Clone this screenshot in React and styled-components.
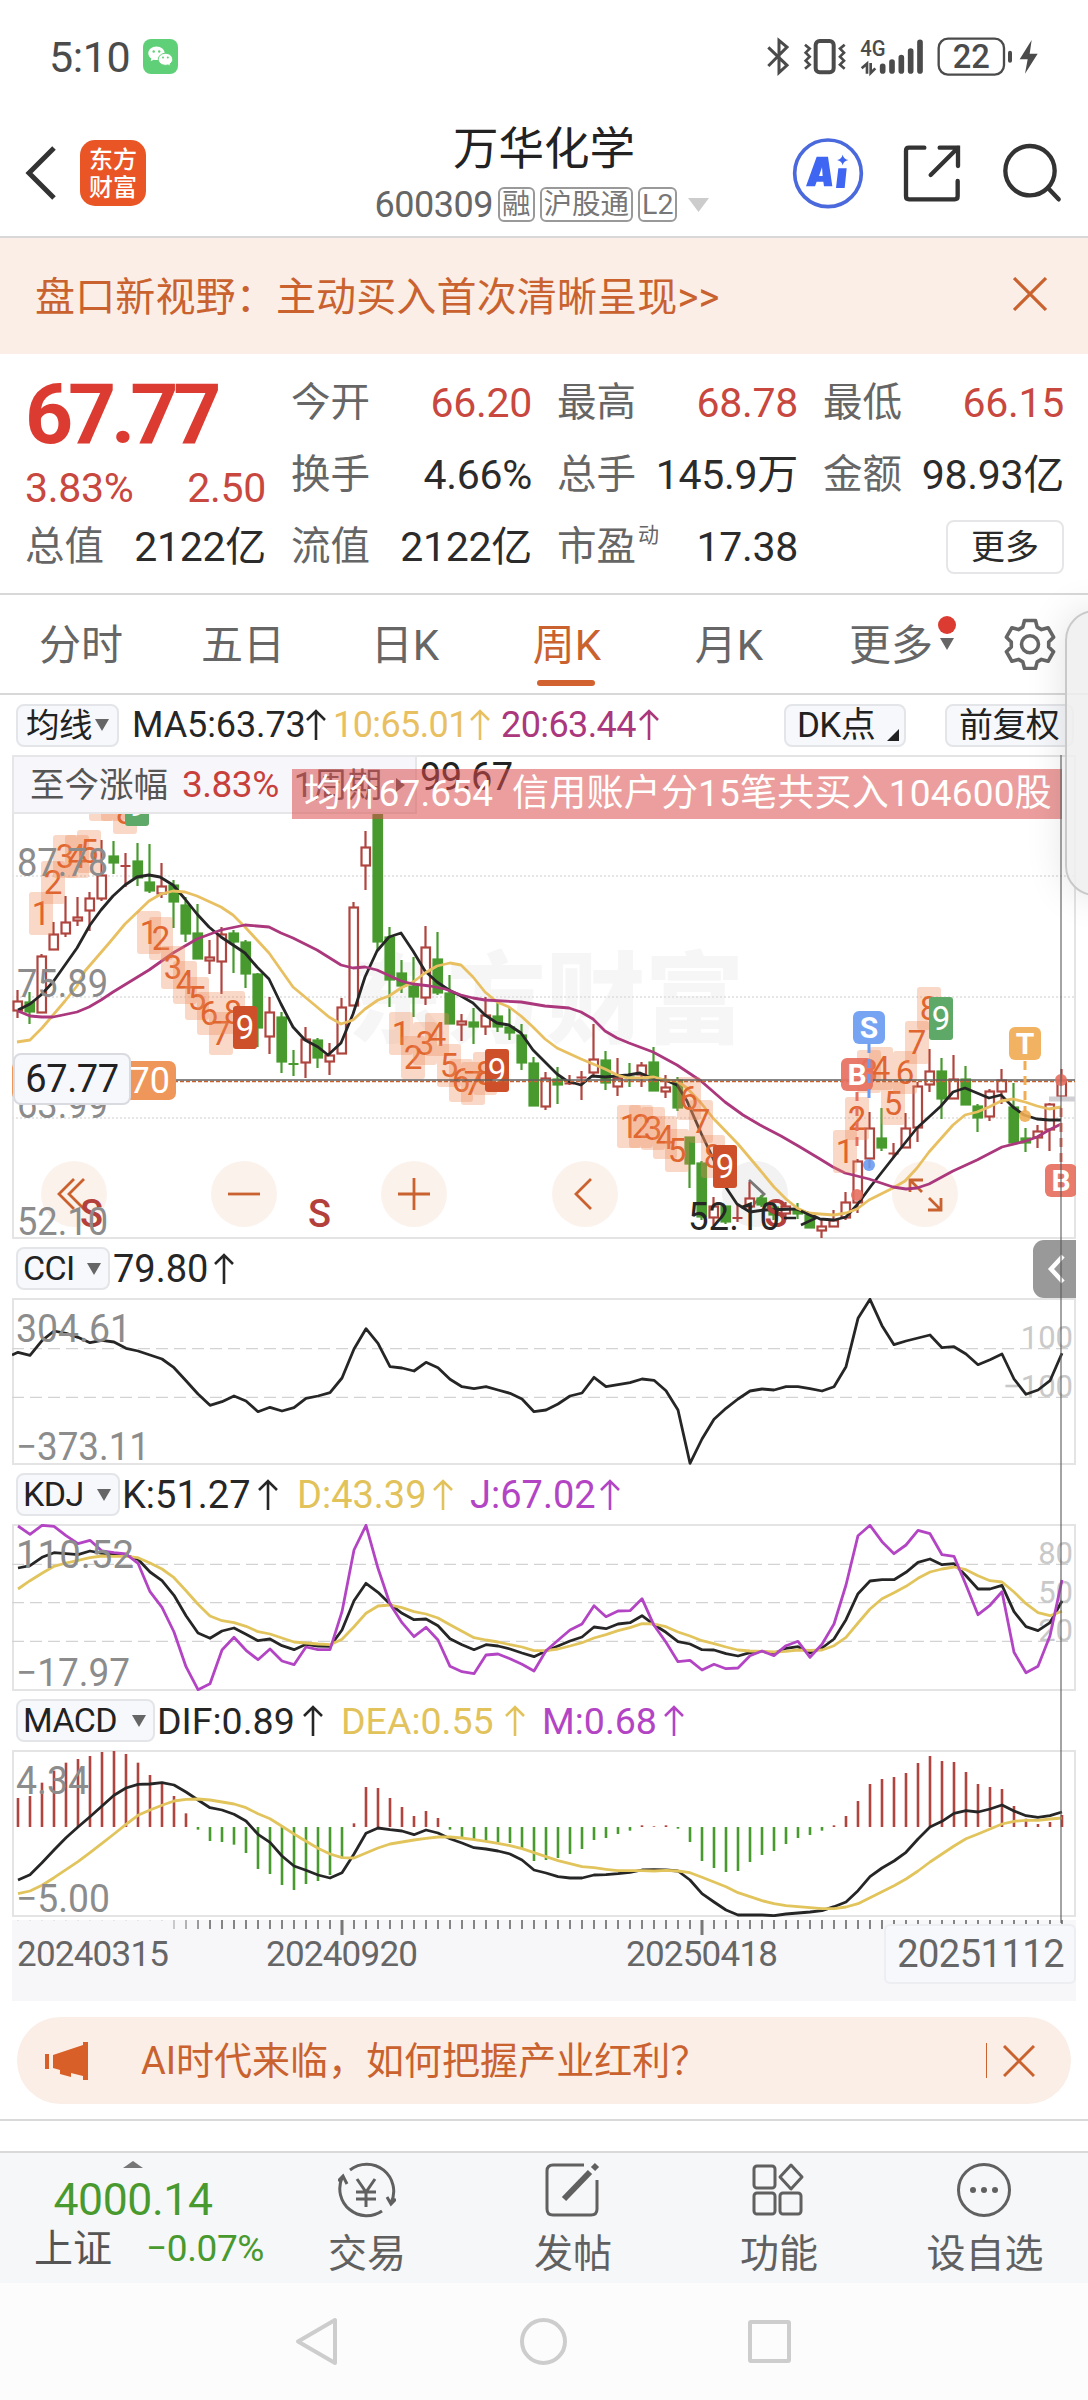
import React from 'react';
import styled, { createGlobalStyle, css } from 'styled-components';

const GlobalStyle = createGlobalStyle`
  * {
    box-sizing: border-box;
  }
  body {
    margin: 0;
    background: #fff;
    font-family: Roboto, "Noto Sans CJK SC", sans-serif;
    color: #222;
  }
  svg {
    display: block;
    flex: none;
  }
`;

const INK = '#262626';
const RED = '#b0453f';
const GREEN = '#489a2f';
const YELLOW = '#e8c062';
const PURPLE = '#ab377c';
const VIOLET = '#b345c4';
const ORANGE = '#c9622f';

/* ---------- chart data ---------- */

// [high, body top, body bottom, low, rising]
const candles = [
  [990, 1001, 1011, 1018, 1], [992, 1002, 1012, 1024, 0], [954, 956, 1013, 1013, 1],
  [922, 934, 950, 950, 1], [896, 922, 934, 937, 1], [897, 917, 921, 926, 1],
  [892, 898, 911, 931, 1], [840, 875, 899, 901, 1], [841, 856, 863, 874, 0],
  [853, 865, 867, 887, 1], [843, 861, 878, 886, 0], [844, 882, 891, 893, 0],
  [863, 886, 894, 898, 1], [880, 885, 902, 928, 0], [897, 905, 934, 942, 0],
  [904, 933, 959, 959, 0], [940, 957, 961, 974, 1], [927, 934, 962, 994, 1],
  [930, 933, 942, 973, 0], [940, 942, 974, 988, 0], [973, 974, 1028, 1047, 0],
  [997, 1012, 1037, 1054, 1], [1012, 1017, 1062, 1073, 0], [1050, 1063, 1065, 1076, 0],
  [1027, 1039, 1063, 1078, 1], [1038, 1040, 1058, 1068, 0], [1043, 1055, 1062, 1075, 1],
  [998, 1007, 1054, 1054, 1], [902, 907, 1006, 1006, 1], [831, 847, 866, 890, 1],
  [780, 790, 942, 950, 0], [927, 937, 980, 1007, 0], [960, 973, 986, 993, 0],
  [957, 986, 997, 1017, 0], [926, 947, 998, 1005, 1], [932, 959, 993, 995, 0],
  [975, 993, 1024, 1024, 0], [1014, 1021, 1025, 1041, 1], [1008, 1022, 1027, 1044, 0],
  [997, 1015, 1027, 1035, 1], [1002, 1016, 1027, 1032, 0], [1008, 1027, 1033, 1040, 0],
  [1024, 1035, 1063, 1070, 0], [1057, 1063, 1106, 1106, 0], [1072, 1078, 1107, 1110, 1],
  [1067, 1079, 1085, 1104, 0], [1075, 1082, 1085, 1085, 1], [1071, 1076, 1079, 1100, 1],
  [1024, 1059, 1073, 1075, 1], [1051, 1060, 1083, 1090, 0], [1058, 1078, 1087, 1096, 1],
  [1063, 1077, 1078, 1087, 0], [1062, 1065, 1075, 1087, 1], [1047, 1062, 1091, 1091, 0],
  [1075, 1087, 1092, 1098, 1], [1077, 1080, 1108, 1111, 0], [1137, 1137, 1164, 1188, 0],
  [1161, 1163, 1217, 1220, 0], [1197, 1206, 1218, 1225, 1], [1206, 1206, 1222, 1224, 0],
  [1205, 1217, 1219, 1222, 1], [1182, 1198, 1207, 1212, 1], [1195, 1198, 1205, 1207, 0],
  [1203, 1207, 1215, 1220, 0], [1202, 1206, 1214, 1220, 1], [1203, 1210, 1214, 1219, 0],
  [1215, 1215, 1228, 1228, 0], [1220, 1226, 1231, 1238, 1], [1210, 1220, 1227, 1227, 1],
  [1192, 1202, 1218, 1220, 1], [1159, 1161, 1203, 1213, 1], [1112, 1128, 1159, 1168, 1],
  [1108, 1138, 1148, 1151, 0], [1143, 1152, 1155, 1158, 1], [1113, 1128, 1148, 1148, 1],
  [1082, 1086, 1128, 1142, 1], [1049, 1071, 1085, 1092, 1], [1058, 1071, 1099, 1119, 0],
  [1055, 1079, 1099, 1099, 1], [1066, 1079, 1105, 1105, 0], [1104, 1106, 1118, 1132, 0],
  [1089, 1091, 1117, 1121, 1], [1069, 1080, 1092, 1104, 1], [1083, 1107, 1143, 1143, 0],
  [1128, 1138, 1143, 1152, 0], [1125, 1131, 1138, 1148, 1], [1103, 1104, 1130, 1151, 1],
  [1069, 1080, 1097, 1097, 1],
];

const ma5 =
  '18,1010 30,1004 41,995 53,982 77,948 90,925 101,910 113,896 125,885 137,877 149,875 160,877 173,885 185,899 197,914 209,927 221,937 245,953 257,967 269,979 281,1004 293,1027 305,1040 318,1047 328,1055 341,1043 353,1014 365,977 377,951 389,937 401,933 413,951 425,971 437,982 449,990 461,996 473,1003 485,1015 497,1023 509,1025 521,1033 533,1050 557,1074 567,1081 581,1085 592,1076 605,1077 628,1075 640,1073 654,1079 665,1080 677,1085 687,1101 701,1133 712,1156 725,1186 737,1204 750,1212 764,1210 796,1209 808,1213 820,1219 834,1220 846,1217 857,1205 871,1186 893,1158 917,1128 941,1106 953,1092 965,1088 989,1098 1001,1095 1013,1107 1024,1115 1037,1119 1049,1120 1061,1120';
const ma10 =
  '17,1042 30,1040 42,1028 65,1001 77,986 85,971 110,942 125,924 149,901 161,894 173,891 185,892 197,896 221,907 233,915 245,927 257,940 269,953 293,987 317,1007 329,1017 341,1024 353,1020 365,1009 378,1000 389,996 401,988 413,982 425,973 437,966 450,963 461,965 473,977 485,992 497,1002 509,1007 521,1016 533,1027 545,1039 557,1048 581,1059 605,1069 617,1075 628,1078 640,1078 654,1077 665,1080 677,1081 687,1088 701,1103 713,1118 738,1144 760,1170 774,1187 786,1199 797,1208 808,1213 820,1214 834,1215 846,1213 857,1209 869,1200 881,1194 893,1188 905,1181 917,1168 929,1152 953,1125 965,1115 977,1112 989,1107 1001,1101 1013,1099 1025,1102 1037,1106 1049,1109 1061,1107';
const ma20 =
  '18,1011 30,1016 42,1017 53,1017 77,1012 89,1007 101,1000 113,992 149,970 173,953 197,939 221,930 245,925 269,927 281,933 293,938 317,950 341,965 353,968 365,967 377,970 401,981 413,984 430,986 445,989 461,995 473,998 485,1000 521,1002 545,1006 569,1008 581,1012 593,1019 605,1031 617,1038 629,1043 653,1052 677,1065 701,1081 725,1102 743,1115 760,1125 781,1136 800,1147 820,1159 833,1167 845,1173 869,1179 893,1187 906,1189 917,1188 929,1184 953,1171 977,1160 1002,1147 1026,1141 1037,1137 1049,1130 1061,1124';

// nine-turn counters: first box x, box tops, colour of the closing 9
const turns = [
  { x: 29, tops: [892, 861, 835, 835, 830, 778, 778, 791, 783], last: '#5fa968' },
  { x: 137, tops: [911, 917, 946, 961, 977, 992, 1012, 991, 1006], last: '#cd502a' },
  { x: 389, tops: [1012, 1036, 1022, 1013, 1044, 1059, 1062, 1052, 1049], last: '#cd502a' },
  { x: 617, tops: [1105, 1105, 1107, 1116, 1129, 1077, 1100, 1135, 1145], last: '#cd502a' },
  { x: 833, tops: [1130, 1097, 1050, 1047, 1082, 1051, 1021, 987, 997], last: '#5fa968' },
];

// indicator series, three units per pixel, measured from the panel's own origin
const cci = [
  367, 376, 332, 303, 310, 322, 338, 331, 336, 355, 363, 375, 387, 413, 452, 492, 526, 515, 498, 513, 545, 532,
  543, 533, 505, 498, 488, 444, 357, 296, 340, 410, 414, 423, 397, 413, 448, 470, 476, 470, 480, 490, 507, 545,
  540, 522, 498, 489, 442, 470, 464, 458, 447, 451, 482, 540, 700, 627, 568, 535, 507, 483, 477, 480, 470, 470,
  476, 483, 470, 410, 265, 208, 287, 344, 333, 324, 315, 353, 350, 372, 404, 389, 372, 447, 493, 480, 452, 370,
];
const kdjK = [
  1014, 1007, 982, 968, 971, 974, 963, 970, 973, 976, 988, 1026, 1052, 1096, 1157, 1209, 1225, 1203, 1194, 1213,
  1232, 1227, 1247, 1259, 1243, 1248, 1249, 1200, 1112, 1060, 1087, 1122, 1150, 1169, 1167, 1187, 1226, 1244,
  1259, 1244, 1248, 1257, 1269, 1280, 1263, 1248, 1233, 1221, 1191, 1196, 1182, 1178, 1157, 1184, 1207, 1235,
  1242, 1259, 1260, 1271, 1278, 1268, 1264, 1270, 1255, 1250, 1269, 1254, 1227, 1169, 1091, 1053, 1049, 1049,
  1027, 997, 987, 1004, 1001, 1037, 1077, 1077, 1066, 1145, 1190, 1202, 1178, 1113,
];
const kdjD = [
  1077, 1052, 1030, 1009, 999, 991, 983, 978, 979, 979, 983, 999, 1017, 1043, 1082, 1123, 1158, 1172, 1178, 1189,
  1205, 1212, 1224, 1236, 1239, 1242, 1244, 1228, 1190, 1150, 1128, 1125, 1133, 1145, 1152, 1164, 1184, 1204,
  1223, 1230, 1236, 1244, 1251, 1262, 1262, 1257, 1248, 1238, 1224, 1214, 1202, 1193, 1181, 1182, 1190, 1206,
  1218, 1232, 1241, 1251, 1260, 1263, 1264, 1266, 1264, 1260, 1261, 1260, 1247, 1222, 1179, 1137, 1106, 1088,
  1069, 1045, 1026, 1017, 1011, 1019, 1037, 1052, 1056, 1086, 1121, 1148, 1157, 1144,
];
const kdjJ = [
  888, 913, 886, 889, 917, 941, 931, 963, 968, 972, 1000, 1085, 1132, 1206, 1310, 1379, 1361, 1260, 1222, 1261,
  1289, 1257, 1293, 1304, 1251, 1259, 1259, 1145, 960, 886, 1015, 1122, 1178, 1220, 1192, 1230, 1309, 1325, 1331,
  1275, 1272, 1286, 1303, 1323, 1262, 1231, 1200, 1182, 1127, 1160, 1143, 1142, 1106, 1186, 1237, 1295, 1291,
  1320, 1303, 1316, 1314, 1277, 1263, 1277, 1247, 1234, 1282, 1243, 1182, 1065, 917, 886, 935, 971, 945, 901,
  911, 974, 979, 1065, 1154, 1126, 1085, 1267, 1328, 1309, 1217, 1050,
];
const macdBars = [
  294, 288, 248, 212, 188, 177, 168, 156, 153, 162, 188, 225, 250, 288, 340, 389, 423, 426, 434, 459, 507, 522,
  555, 570, 552, 543, 525, 472, 370, 261, 264, 294, 321, 348, 333, 354, 389, 411, 420, 423, 427, 429, 447, 483,
  480, 474, 462, 447, 420, 414, 402, 392, 376, 379, 376, 386, 426, 483, 504, 516, 513, 486, 465, 453, 432, 414,
  405, 392, 376, 348, 303, 252, 237, 231, 219, 189, 168, 183, 186, 216, 252, 261, 267, 318, 356, 372, 366, 345,
];
const dif = [
  540, 524, 488, 450, 413, 381, 350, 318, 286, 264, 253, 252, 248, 255, 276, 300, 323, 330, 343, 363, 403, 427,
  468, 498, 511, 525, 534, 518, 462, 400, 384, 389, 393, 404, 390, 399, 416, 429, 443, 447, 453, 462, 480, 510,
  519, 530, 534, 534, 525, 524, 521, 517, 510, 509, 510, 513, 540, 581, 606, 630, 645, 645, 645, 647, 642, 639,
  636, 632, 620, 606, 572, 530, 504, 483, 457, 417, 381, 364, 340, 332, 336, 327, 315, 333, 347, 352, 347, 336,
];
const dea = [
  581, 573, 556, 533, 509, 485, 458, 430, 402, 373, 346, 330, 316, 303, 298, 297, 300, 306, 312, 323, 341, 356,
  379, 402, 424, 445, 462, 473, 474, 459, 444, 432, 426, 420, 415, 411, 411, 414, 419, 424, 430, 437, 446, 458,
  470, 482, 491, 500, 503, 508, 512, 512, 512, 513, 511, 513, 518, 532, 546, 560, 578, 590, 602, 611, 617, 620,
  623, 626, 626, 621, 611, 593, 575, 557, 537, 513, 486, 462, 438, 416, 402, 387, 372, 364, 361, 361, 357, 354,
];

const toPoints = (values, origin) =>
  values.map((v, i) => `${6 + 12 * i},${((v - origin) / 3).toFixed(1)}`).join(' ');

/* ---------- page shell ---------- */

const Page = styled.div`
  position: relative;
  width: 1088px;
  height: 2400px;
  overflow: hidden;
  display: flex;
  flex-direction: column;
  background: #fff;
`;

const StatusBar = styled.div`
  height: 115px;
  padding: 0 48px 2px 49px;
  display: flex;
  align-items: center;
  justify-content: space-between;
  color: #4b4b4b;
`;

const Clock = styled.div`
  display: flex;
  align-items: center;
  gap: 13px;
  font-size: 43px;
  letter-spacing: -0.4px;
  line-height: 50px;
`;

const Header = styled.header`
  height: 123px;
  border-bottom: 2px solid #d8d8d8;
  display: grid;
  grid-template-columns: 362px 1fr 362px;
  align-items: center;
`;

const HeaderLeft = styled.div`
  display: flex;
  align-items: center;
  gap: 23px;
  padding: 0 0 5px 25px;
`;

const Logo = styled.div`
  width: 66px;
  height: 66px;
  border-radius: 15px;
  background: #ea5526;
  color: #fff;
  font-family: "Noto Sans CJK SC", sans-serif;
  font-weight: 500;
  font-size: 24px;
  line-height: 28px;
  text-align: center;
  padding-top: 4px;
`;

const HeaderRight = styled.div`
  display: flex;
  align-items: center;
  justify-content: flex-end;
  padding: 0 26px 5px 0;
`;

const TitleBlock = styled.div`
  display: flex;
  flex-direction: column;
  align-items: center;
  padding-bottom: 7px;
`;

const Title = styled.h1`
  margin: 0 0 5px;
  font-size: 45.5px;
  font-weight: 400;
  line-height: 60px;
  color: #222;
`;

const SubTitle = styled.div`
  display: flex;
  align-items: center;
  height: 40px;
  font-size: 36px;
  letter-spacing: -0.5px;
  color: #666;
  gap: 5px;
  padding-right: 3px;
`;

const Tag = styled.span`
  height: 35px;
  padding: 0 2px;
  border: 2px solid #999;
  border-radius: 6px;
  font-size: 28.5px;
  letter-spacing: 0;
  line-height: 31px;
  color: #777;
`;

const Notice = styled.div`
  height: 116px;
  background: #fbeee6;
  color: ${ORANGE};
  display: flex;
  align-items: center;
  justify-content: space-between;
  padding: 0 41px 4px 35px;
  font-size: 40px;
  letter-spacing: 0.15px;
`;

/* ---------- quote panel ---------- */

const QuotePanel = styled.section`
  height: 241px;
  padding: 13px 24px 0 25px;
  border-bottom: 2px solid #d8d8d8;
  display: grid;
  grid-template-columns: repeat(4, 241px);
  grid-template-rows: repeat(3, 72px);
  column-gap: 25px;
`;

const PriceCell = styled.div`
  grid-row: span 2;
`;

const Price = styled.div`
  font-size: 84px;
  font-weight: 700;
  line-height: 96px;
  letter-spacing: -5.2px;
  color: #dc3b31;
`;

const QuoteCell = styled.div`
  display: flex;
  align-items: center;
  justify-content: space-between;
  font-size: 41px;
  line-height: 50px;
  letter-spacing: -0.3px;
  color: ${p => (p.$up ? '#c8473e' : '#2b2b2b')};
  ${p =>
    p.$end &&
    css`
      justify-content: flex-end;
    `}
  ${p =>
    p.$short &&
    css`
      height: 50px;
    `}
`;

const QuoteLabel = styled.span`
  display: flex;
  font-size: 39.5px;
  color: #666;
  letter-spacing: 0;
`;

const Sup = styled.sup`
  font-size: 21px;
  line-height: 21px;
  margin: 3px 0 0 2px;
`;

const MoreButton = styled.button`
  width: 118px;
  height: 54px;
  padding: 0;
  border: 2px solid #e6e6e8;
  border-radius: 8px;
  background: #fff;
  font: 34px/46px Roboto, "Noto Sans CJK SC", sans-serif;
  color: #2b2b2b;
`;

/* ---------- period tabs ---------- */

const Tabs = styled.nav`
  height: 100px;
  border-bottom: 2px solid #d8d8d8;
  display: flex;
`;

const Tab = styled.div`
  position: relative;
  width: 162px;
  padding-top: 3px;
  text-align: center;
  font-size: 42px;
  line-height: 95px;
  color: ${p => (p.$active ? ORANGE : '#666')};
  ${p =>
    p.$active &&
    css`
      &::after {
        content: '';
        position: absolute;
        left: 51px;
        bottom: 7px;
        width: 58px;
        height: 6px;
        border-radius: 3px;
        background: #d2622f;
      }
    `}
`;

const RedDot = styled.i`
  position: absolute;
  top: 21px;
  right: 16px;
  width: 18px;
  height: 18px;
  border-radius: 50%;
  background: #dc3b31;
`;

const TabCaret = styled.i`
  position: absolute;
  top: 43px;
  right: 18px;
  border: 7px solid transparent;
  border-top: 12px solid #666;
  border-bottom: 0;
`;

const GearCell = styled.div`
  flex: 1;
  display: flex;
  align-items: center;
  padding-left: 32px;
`;

/* ---------- chart block ---------- */

const Charts = styled.section`
  position: relative;
  padding: 0 12px;
  height: 1305px;
`;

const Crosshair = styled.div`
  position: absolute;
  left: 1060px;
  top: 60px;
  width: 2px;
  height: 1168px;
  background: rgba(90, 90, 90, 0.55);
`;

const IndicatorRow = styled.div`
  display: flex;
  align-items: center;
  height: ${p => p.$h || 60}px;
  padding: 0 2px 0 4px;
`;

const Picker = styled.div`
  position: relative;
  width: ${p => p.$w}px;
  height: 43px;
  border: 2px solid #e3e5e9;
  border-radius: 8px;
  background: #f7f8fb;
  display: flex;
  align-items: center;
  justify-content: space-between;
  padding: 0 ${p => p.$pad || 7}px 0 ${p => p.$pad || 5}px;
  font-size: ${p => p.$size || 34}px;
  line-height: 39px;
  letter-spacing: -0.6px;
`;

const Caret = styled.i`
  border: 7px solid transparent;
  border-top: 12px solid #666;
  border-bottom: 0;
`;

const CornerCaret = styled.i`
  position: absolute;
  right: 5px;
  bottom: 4px;
  border-left: 12px solid transparent;
  border-bottom: 12px solid #222;
`;

const Reading = styled.div`
  display: flex;
  align-items: center;
  justify-content: space-between;
  width: ${p => p.$w}px;
  margin-left: ${p => p.$ml}px;
  font-size: ${p => p.$size || 38}px;
  line-height: 44px;
  letter-spacing: ${p => p.$ls || 0}px;
  white-space: nowrap;
  color: ${p => p.$color || INK};
`;

const Spacer = styled.div`
  flex: 1;
  max-width: ${p => (p.$max ? `${p.$max}px` : 'none')};
`;

const Plot = styled.div`
  position: relative;
  height: ${p => p.$h}px;
`;

const ChartLayer = styled.div`
  position: relative;
`;

const SinceStrip = styled.div`
  position: absolute;
  left: 0;
  top: 0;
  width: 405px;
  height: 59px;
  border: 2px solid #e6e6e8;
  background: #f7f7fb;
  display: flex;
  align-items: center;
  padding-left: 16px;
  font-size: 34.5px;
  line-height: 50px;
  white-space: nowrap;
  color: #555;
`;

const SinceValue = styled.span`
  margin: 0 15px 0 14px;
  font-size: 37px;
  letter-spacing: -0.5px;
  color: #c8403c;
`;

const SinceMark = styled.i`
  margin-left: 14px;
  border: 7px solid transparent;
  border-left: 9px solid #555;
  border-right: 0;
`;

const DealBand = styled.div`
  position: absolute;
  left: 280px;
  top: 14px;
  width: 770px;
  height: 50px;
  padding-left: 12px;
  background: rgba(219, 78, 76, 0.55);
  font-size: 37px;
  line-height: 49px;
  letter-spacing: 0.2px;
  white-space: pre;
  color: #fff;
`;

const HighMark = styled.div`
  position: absolute;
  left: 408px;
  top: 0;
  font-size: 38px;
  line-height: 44px;
  letter-spacing: -0.6px;
`;

const PriceTag = styled.div`
  position: absolute;
  left: 1px;
  top: 298px;
  width: 118px;
  height: 52px;
  border: 2px solid #d9dbe0;
  border-radius: 8px;
  background: #f7f8fb;
  font-size: 38px;
  line-height: 48px;
  letter-spacing: -0.4px;
  text-align: center;
`;

const CostTag = styled.div`
  position: absolute;
  left: 0;
  top: 306px;
  width: 164px;
  height: 39px;
  border-radius: 7px;
  background: #ef965b;
  color: #fff;
  font-size: 36px;
  line-height: 40px;
  text-align: right;
  padding-right: 6px;
`;

const RoundButton = styled.div`
  position: absolute;
  left: ${p => p.$x - 33}px;
  top: 406px;
  width: 66px;
  height: 66px;
  border-radius: 50%;
  background: ${p => (p.$muted ? '#f2f2f2' : '#fbf2ec')};
  color: ${p => (p.$muted ? '#777' : ORANGE)};
`;

const DrawerTab = styled.div`
  position: absolute;
  right: 12px;
  top: 545px;
  width: 43px;
  height: 58px;
  border-radius: 11px 0 0 11px;
  background: #999;
  display: flex;
  align-items: center;
  padding-left: 14px;
`;

const Axis = styled.div`
  height: 81px;
  margin-top: 3px;
  position: relative;
  background: #f7f7fa;
`;

const CurrentDate = styled.div`
  position: absolute;
  right: 0;
  top: 4px;
  width: 192px;
  height: 60px;
  border: 2px solid #edeef1;
  border-radius: 6px;
  background: #f7f8fb;
  font-size: 38px;
  line-height: 56px;
  text-align: right;
  padding-right: 10px;
  letter-spacing: -0.5px;
  color: #666;
`;

/* ---------- bottom ---------- */

const Promo = styled.div`
  height: 87px;
  margin: 17px 17px 15px 17px;
  border-radius: 44px;
  background: #fbeee6;
  color: ${ORANGE};
  display: flex;
  align-items: center;
  font-size: 38px;
  padding: 0 36px 0 28px;
`;

const PromoText = styled.span`
  flex: 1;
  margin-left: 52px;
  padding-bottom: 6px;
`;

const PromoDivider = styled.i`
  width: 1px;
  height: 35px;
  margin-right: 16px;
  background: ${ORANGE};
`;

const Divider = styled.div`
  height: 34px;
  border-top: 2px solid #d9d9d9;
  border-bottom: 2px solid #d9d9d9;
`;

const BottomBar = styled.footer`
  height: 130px;
  background: #f6f7f9;
  display: flex;
`;

const IndexBox = styled.div`
  width: 264px;
  display: flex;
  flex-direction: column;
  align-items: center;
  padding: 8px 0 0 2px;
`;

const UpCaret = styled.i`
  border: 10px solid transparent;
  border-bottom: 7px solid #777;
  border-top: 0;
`;

const IndexValue = styled.div`
  margin-top: 7px;
  font-size: 44.5px;
  line-height: 50px;
  letter-spacing: -0.4px;
  color: ${GREEN};
`;

const IndexRow = styled.div`
  width: 230px;
  margin-left: 32px;
  display: flex;
  align-items: center;
  justify-content: space-between;
  font-size: 39px;
  line-height: 20px;
  margin-top: 14px;
  color: #555;
`;

const IndexChange = styled.span`
  font-size: 37px;
  letter-spacing: -0.4px;
  color: ${GREEN};
`;

const Action = styled.div`
  width: 206px;
  display: flex;
  flex-direction: column;
  align-items: center;
  padding-top: 9px;
  font-size: 39px;
  line-height: 72px;
  color: #606060;
`;

const SystemNav = styled.div`
  flex: 1;
  background: #fcfcfc;
  display: flex;
  justify-content: center;
  padding-top: 32px;
`;

const EdgePanel = styled.div`
  position: absolute;
  left: 1065px;
  top: 610px;
  width: 60px;
  height: 286px;
  border: 2px solid #c9c9c9;
  border-radius: 44px;
  background: rgba(238, 238, 238, 0.85);
  box-shadow: 0 0 40px rgba(0, 0, 0, 0.12);
`;

/* ---------- small drawings ---------- */

const UpArrow = () => (
  <svg width="20" height="32" viewBox="0 0 20 32" fill="none" stroke="currentColor" strokeWidth="2.600">
    <path d="M10 31V2M1 11l9-9 9 9" />
  </svg>
);

const Cross = ({ size }) => (
  <svg width={size} height={size} viewBox="0 0 32 32" fill="none" stroke={ORANGE} strokeWidth="3">
    <path d="M1 1l30 30M31 1L1 31" />
  </svg>
);

const WeChat = () => (
  <svg width="35" height="35" viewBox="0 0 35 35">
    <rect width="35" height="35" rx="8" fill="#5fd077" />
    <path d="M13.5 7.5c-4.600 0-8.200 3-8.200 6.800 0 2.200 1.200 4 3 5.300l-.6 2.600 2.900-1.500c1 .3 1.900.4 2.900.4 4.600 0 8.200-3 8.200-6.800s-3.600-6.800-8.200-6.800z" fill="#fff" />
    <path d="M22.500 14.300c-4 0-7.200 2.700-7.200 6s3.200 6 7.200 6c.9 0 1.700-.1 2.500-.4l2.500 1.300-.5-2.200c1.700-1.100 2.700-2.800 2.700-4.700 0-3.300-3.200-6-7.200-6z" fill="#fff" stroke="#5fd077" />
    <g fill="#5fd077">
      <circle cx="10.700" cy="12.500" r="1.200" />
      <circle cx="16.200" cy="12.500" r="1.200" />
      <circle cx="20" cy="18.500" r="1" />
      <circle cx="24.800" cy="18.500" r="1" />
    </g>
  </svg>
);

const StatusIcons = () => (
  <svg width="273" height="40" viewBox="80 49 819 120" fill="none" stroke="#4b4b4b">
    <path d="M84 80l56 54-24 22V59l24 20-56 57" strokeWidth="9" />
    <rect x="226" y="61" width="54" height="94" rx="12" strokeWidth="12" />
    <path d="M194 72l14 12-12 12 12 12-12 12 12 12-14 12M313 72l-14 12 12 12-12 12 12 12-12 12 14 12" strokeWidth="8" />
    <g strokeWidth="17" strokeLinecap="round">
      <path d="M427 137v14M455 124v27M483 111v40M511 91v60M539 65v86" />
    </g>
    <path d="M380 159v-30l-16 14M391 127v30l14-14" strokeWidth="8" />
    <rect x="595" y="54" width="196" height="108" rx="28" strokeWidth="7" />
    <path d="M809 96v24" strokeWidth="12" strokeLinecap="round" />
    <path d="M874 58l-36 58h24l-8 43 38-60h-24z" fill="#4b4b4b" stroke="none" />
    <text x="398" y="107" fontSize="66" fontWeight="500" textAnchor="middle" textLength="76" lengthAdjust="spacingAndGlyphs" fill="#4b4b4b" stroke="none">4G</text>
    <text x="693" y="143" fontSize="98" fontWeight="500" textAnchor="middle" fill="#4b4b4b" stroke="none">22</text>
  </svg>
);

const BackIcon = () => (
  <svg width="32" height="54" viewBox="0 0 32 54" fill="none" stroke="#333" strokeWidth="5">
    <path d="M29 2L4 27l25 25" />
  </svg>
);

const HeaderIcons = () => (
  <svg width="270" height="72" viewBox="152 348 810 216" fill="none" stroke="#333" strokeWidth="13" strokeLinecap="round">
    <circle cx="260" cy="457" r="100" stroke="#4a69dd" strokeWidth="11" />
    <path d="M194 496l32-89h34l13 89h-25l-2-14h-20l-5 14zM233 465h11l-2-26z" fill="#3f66f2" fillRule="evenodd" stroke="none" />
    <path d="M291 442h25l-6 59h-26zM304 401q3 13 17 16-14 3-17 16-3-13-17-16 14-3 17-16z" fill="#3f66f2" stroke="none" />
    <path d="M549 380h-46q-9 0-9 9v137q0 9 9 9h137q9 0 9-9v-46M595 380h55v55M650 380l-82 82" />
    <circle cx="866" cy="449" r="74" />
    <path d="M920 501l32 34" />
  </svg>
);

const GearIcon = () => (
  <svg width="52" height="52" viewBox="0 0 52 52" fill="none" stroke="#666" strokeWidth="3.600" strokeLinejoin="round">
    <path d="M20.500 2.500h11l1.700 6.600 4.300 2.500 6.600-1.900 5.500 9.500-4.900 4.800v5l4.900 4.700-5.500 9.600-6.600-1.900-4.300 2.500-1.700 6.600h-11l-1.700-6.600-4.300-2.500-6.600 1.900-5.500-9.600 4.900-4.700v-5l-4.900-4.800 5.500-9.500 6.600 1.900 4.300-2.500z" />
    <circle cx="26" cy="26.300" r="8.500" />
  </svg>
);

const Megaphone = () => (
  <svg width="44" height="38" viewBox="0 0 44 38" fill="#d95f28">
    <path d="M0 12h4v15H0zM8 13L38 3V0h5v38h-5v-4l-12-3v4l-11-3v-4l-7-2z" />
  </svg>
);

const buttonIcons = [
  { x: 62, d: 'M33 18L18 33l15 15M43 18L28 33l15 15' },
  { x: 232, d: 'M17 33h32' },
  { x: 402, d: 'M17 33h32M33 17v32' },
  { x: 573, d: 'M39 18L24 33l15 15' },
  { x: 743, d: 'M27 19l15 14-15 15', muted: true },
  { x: 913, d: 'M18 31V19h13M18 19l12 12M49 37v12H36M49 49L37 37' },
];

/* ---------- charts ---------- */

const AxisLabel = ({ x = 17, y, w, children }) => (
  <text x={x} y={y} fontSize="38.500" fill="#8c8c8c" textLength={w} lengthAdjust="spacingAndGlyphs">
    {children}
  </text>
);

const Candle = ({ index, data }) => {
  const [high, top, bottom, low, rising] = data;
  const x = 17.500 + 12 * index;
  const color = rising ? RED : GREEN;
  return (
    <g stroke={color} strokeWidth="2.200">
      <path d={`M${x} ${high}V${top}M${x} ${bottom}V${low}`} />
      {bottom - top < 4 ? (
        <path d={`M${x - 5} ${(top + bottom) / 2}h10M${x} ${top}V${bottom}`} />
      ) : (
        <rect x={x - 4} y={top + 0.500} width="8.500" height={bottom - top - 1} fill={rising ? '#fff' : color} />
      )}
    </g>
  );
};

const TurnMarks = ({ x, tops, last }) =>
  tops.map((top, i) => (
    <g key={i}>
      <rect x={x + 12 * i} y={top} width="24" height="43" rx="3" fill={i === 8 ? last : 'rgba(236, 140, 92, 0.34)'} />
      <text x={x + 12 * i + 12} y={top + 33} fontSize="33" textAnchor="middle" fill={i === 8 ? '#fff' : '#e0652f'}>
        {i + 1}
      </text>
    </g>
  ));

const TradeBadge = ({ x, y, color, letter, line, dot }) => (
  <g>
    <path d={`M${x} ${line[0]}V${line[1]}`} stroke={color} strokeWidth="3" strokeDasharray="9 6" />
    <circle cx={x} cy={dot} r="6" fill={color} fillOpacity="0.9" />
    <rect x={x - 16} y={y} width="32" height="33" rx="6" fill={color} fillOpacity="0.92" />
    <text x={x} y={y + 27} fontSize="30" fontWeight="700" textAnchor="middle" fill="#fff">
      {letter}
    </text>
  </g>
);

const Watermark = () => (
  <svg width="1064" height="484" viewBox="12 755 1064 484">
    <text x="348" y="1035" fontSize="99" fontWeight="900" fill="#f6f6f6">东方财富</text>
  </svg>
);

const PriceChart = () => (
  <svg width="1064" height="484" viewBox="12 755 1064 484" fill="none">
    <rect x="13" y="756" width="1062" height="482" stroke="#e4e4e4" strokeWidth="2" />
    <path d="M12 876H1075M12 997H1075M12 1118H1075" stroke="#dedede" strokeWidth="1.500" strokeDasharray="2 2" />
    {candles.map((c, i) => (
      <Candle key={i} index={i} data={c} />
    ))}
    <g strokeWidth="2.800" strokeLinejoin="round">
      <polyline points={ma5} stroke={INK} />
      <polyline points={ma10} stroke={YELLOW} />
      <polyline points={ma20} stroke={PURPLE} />
    </g>
    {turns.map(t => (
      <TurnMarks key={t.x} {...t} />
    ))}
    <path d="M12 1081.500H1075" stroke="#c9622f" strokeWidth="1.500" strokeDasharray="4 2" />
    <path d="M12 1080H1075" stroke="#5f5f5f" strokeWidth="1.300" />
    <path d="M1049 1099H1075" stroke="#cfcfd4" strokeWidth="5" />
    <TradeBadge x={857} y={1058} color="#e6705f" letter="B" line={[1092, 1147]} dot={1195} />
    <TradeBadge x={869} y={1011} color="#6a9cf2" letter="S" line={[1044, 1099]} dot={1165} />
    <TradeBadge x={1025} y={1027} color="#f0ad55" letter="T" line={[1061, 1112]} dot={1116} />
    <TradeBadge x={1061} y={1164} color="#e6705f" letter="B" line={[1108, 1163]} dot={1080} />
    <AxisLabel y={876} w={91}>87.78</AxisLabel>
    <AxisLabel y={997} w={91}>75.89</AxisLabel>
    <AxisLabel y={1118} w={91}>63.99</AxisLabel>
    <g fontSize="38" fontWeight="500" fill="#b3403b" textAnchor="middle">
      <text x="91.500" y="1227">S</text>
      <text x="319.500" y="1227">S</text>
      <text x="776" y="1227">S</text>
    </g>
    <AxisLabel y={1235} w={91}>52.10</AxisLabel>
    <text x="688" y="1230" fontSize="38" fill={INK} textLength="92" lengthAdjust="spacingAndGlyphs">52.10</text>
    <path d="M784 1218h12M801 1211l15 7-15 7" stroke={INK} strokeWidth="2.600" />
  </svg>
);

const IndicatorPlot = ({ origin, grid, children }) => (
  <svg width="1064" height="167" viewBox="0 -1 1064 167" fill="none">
    <rect x="1" y="0" width="1062" height="165" stroke="#e4e4e4" strokeWidth="2" />
    {grid.map(g => (
      <path key={g} d={`M0 ${(g - origin) / 3}H1062`} stroke="#d3d3d3" strokeWidth="1.300" strokeDasharray="12 6" />
    ))}
    <g strokeWidth="2.800" strokeLinejoin="round">{children}</g>
  </svg>
);

const Level = ({ y, children }) => (
  <text x="1061" y={y} fontSize="31" textAnchor="end" fill="#c9c9c9">
    {children}
  </text>
);

const Cci = () => (
  <IndicatorPlot origin={207} grid={[356, 502]}>
    <Level y={49}>100</Level>
    <Level y={98}>−100</Level>
    <polyline points={`0,56 ${toPoints(cci, 207)}`} stroke={INK} />
    <AxisLabel x={4} y={43} w={115}>304.61</AxisLabel>
    <AxisLabel x={4} y={161} w={134}>−373.11</AxisLabel>
  </IndicatorPlot>
);

const Kdj = () => (
  <IndicatorPlot origin={885} grid={[1003, 1118, 1234]}>
    <Level y={39}>80</Level>
    <Level y={78}>50</Level>
    <Level y={116}>20</Level>
    <polyline points={toPoints(kdjK, 885)} stroke={INK} />
    <polyline points={toPoints(kdjD, 885)} stroke="#e2c45c" />
    <polyline points={toPoints(kdjJ, 885)} stroke={VIOLET} />
    <AxisLabel x={4} y={43} w={118}>110.52</AxisLabel>
    <AxisLabel x={4} y={161} w={114}>−17.97</AxisLabel>
  </IndicatorPlot>
);

const Macd = () => (
  <IndicatorPlot origin={153} grid={[]}>
    {macdBars.map((v, i) => (
      <path
        key={i}
        d={`M${6 + 12 * i} 76V${(v - 153) / 3}`}
        stroke={v < 381 ? RED : GREEN}
        strokeWidth="2.600"
      />
    ))}
    <polyline points={toPoints(dif, 153)} stroke={INK} />
    <polyline points={toPoints(dea, 153)} stroke="#e2c45c" />
    <AxisLabel x={4} y={43} w={73}>4.34</AxisLabel>
    <AxisLabel x={4} y={161} w={94}>−5.00</AxisLabel>
  </IndicatorPlot>
);

const DateScale = () => (
  <svg width="1064" height="81" viewBox="0 0 1064 81">
    {candles.map((c, i) => {
      const major = i === 27 || i === 57;
      return (
        <path
          key={i}
          d={`M${6 + 12 * i} 0V${major ? 15 : i < 13 ? 1 : 9}`}
          stroke="#777"
          strokeOpacity={i < 16 ? Math.max(0.15, (i - 11) / 5) : 1}
          strokeWidth={major ? 3 : 1.800}
        />
      );
    })}
    <g fontSize="35" fill="#666">
      <text x="5" y="46" textLength="152">20240315</text>
      <text x="254" y="46" textLength="152">20240920</text>
      <text x="614" y="46" textLength="152">20250418</text>
    </g>
  </svg>
);

/* ---------- sections ---------- */

const Quote = ({ label, value, up }) => (
  <QuoteCell $up={up}>
    <QuoteLabel>{label}</QuoteLabel>
    {value}
  </QuoteCell>
);

const Quotes = () => (
  <QuotePanel>
    <PriceCell>
      <Price>67.77</Price>
      <QuoteCell $up $short>
        <span>3.83%</span>
        <span>2.50</span>
      </QuoteCell>
    </PriceCell>
    <Quote label="今开" value="66.20" up />
    <Quote label="最高" value="68.78" up />
    <Quote label="最低" value="66.15" up />
    <Quote label="换手" value="4.66%" />
    <Quote label="总手" value="145.9万" />
    <Quote label="金额" value="98.93亿" />
    <Quote label="总值" value="2122亿" />
    <Quote label="流值" value="2122亿" />
    <Quote label={<>市盈<Sup>动</Sup></>} value="17.38" />
    <QuoteCell $end>
      <MoreButton>更多</MoreButton>
    </QuoteCell>
  </QuotePanel>
);

const PeriodTabs = () => (
  <Tabs>
    {['分时', '五日', '日K', '周K', '月K'].map(name => (
      <Tab key={name} $active={name === '周K'}>{name}</Tab>
    ))}
    <Tab>
      更多
      <RedDot />
      <TabCaret />
    </Tab>
    <GearCell>
      <GearIcon />
    </GearCell>
  </Tabs>
);

const ChartBlock = () => (
  <Charts>
    <IndicatorRow>
      <Picker $w={103} $size={33.500} $pad={8}>均线<Caret /></Picker>
      <Reading $w={189} $ml={13} $size={36} $ls={-0.100}>MA5:63.73<UpArrow /></Reading>
      <Reading $w={157} $ml={12} $size={36} $ls={-0.600} $color={YELLOW}>10:65.01<UpArrow /></Reading>
      <Reading $w={158} $ml={11} $size={36} $ls={-0.600} $color={PURPLE}>20:63.44<UpArrow /></Reading>
      <Spacer />
      <Picker $w={122} $size={35} $pad={11}>DK点<CornerCaret /></Picker>
      <Spacer $max={39} />
      <Picker $w={129} $size={34} $pad={12}>前复权</Picker>
    </IndicatorRow>
    <Plot $h={484}>
      {buttonIcons.map(b => (
        <RoundButton key={b.x} $x={b.x} $muted={b.muted}>
          <svg width="66" height="66" fill="none" stroke="currentColor" strokeWidth="2.800">
            <path d={b.d} />
          </svg>
        </RoundButton>
      ))}
      <ChartLayer>
        <PriceChart />
      </ChartLayer>
      <CostTag>70</CostTag>
      <PriceTag>67.77</PriceTag>
      <SinceStrip>
        至今涨幅<SinceValue>3.83%</SinceValue>1周期<SinceMark />
      </SinceStrip>
      <HighMark>99.67</HighMark>
      <DealBand>均价67.654  信用账户分15笔共买入104600股</DealBand>
    </Plot>
    <IndicatorRow $h={59}>
      <Picker $w={94}>CCI<Caret /></Picker>
      <Reading $w={121} $ml={3}>79.80<UpArrow /></Reading>
    </IndicatorRow>
    <Cci />
    <IndicatorRow $h={59}>
      <Picker $w={104}>KDJ<Caret /></Picker>
      <Reading $w={156} $ml={2}>K:51.27<UpArrow /></Reading>
      <Reading $w={156} $ml={19} $color="#e2c25a">D:43.39<UpArrow /></Reading>
      <Reading $w={150} $ml={17} $color={VIOLET}>J:67.02<UpArrow /></Reading>
    </IndicatorRow>
    <Kdj />
    <IndicatorRow $h={59}>
      <Picker $w={139}>MACD<Caret /></Picker>
      <Reading $w={166} $ml={2} $size={37.500}>DIF:0.89<UpArrow /></Reading>
      <Reading $w={184} $ml={18} $size={37.500} $color="#e2c25a">DEA:0.55<UpArrow /></Reading>
      <Reading $w={142} $ml={17} $size={37.500} $color={VIOLET}>M:0.68<UpArrow /></Reading>
    </IndicatorRow>
    <Macd />
    <Axis>
      <DateScale />
      <CurrentDate>20251112</CurrentDate>
    </Axis>
    <DrawerTab>
      <svg width="18" height="30" fill="none" stroke="#fff" strokeWidth="4.500">
        <path d="M16 2L4 15l12 13" />
      </svg>
    </DrawerTab>
    <Crosshair />
  </Charts>
);

const BackdropPlot = styled.div`
  position: absolute;
  left: 12px;
  top: 755px;
`;

const actions = [
  {
    name: '交易',
    icon: (
      <>
        <path d="M12 8A27 27 0 0 1 53 41M44 49A27 27 0 0 1 4 16M0 19l5-5 4 8M58 37l-5 5-4-7" />
        <path d="M19 17l9 13 9-13M28 30v15M18 30h20M18 37h20" />
      </>
    ),
  },
  {
    name: '发帖',
    icon: (
      <>
        <path d="M40 3H9Q3 3 3 9v38q0 6 6 6h38q6 0 6-6V18" />
        <path d="M20 37l26-27" strokeWidth="6" />
        <path d="M49 7l4-4" strokeWidth="6" />
      </>
    ),
  },
  {
    name: '功能',
    icon: (
      <>
        <rect x="4" y="4" width="21" height="22" rx="3" />
        <rect x="4" y="31" width="21" height="21" rx="3" />
        <rect x="30" y="31" width="21" height="21" rx="3" />
        <path d="M41 3l11 12-11 12-11-12z" strokeLinejoin="round" />
      </>
    ),
  },
  {
    name: '设自选',
    icon: (
      <>
        <circle cx="28" cy="28" r="25.500" />
        <g fill="#606060" stroke="none">
          <circle cx="17" cy="28" r="3" />
          <circle cx="28" cy="28" r="3" />
          <circle cx="39" cy="28" r="3" />
        </g>
      </>
    ),
  },
];

const Footer = () => (
  <BottomBar>
    <IndexBox>
      <UpCaret />
      <IndexValue>4000.14</IndexValue>
      <IndexRow>
        上证<IndexChange>−0.07%</IndexChange>
      </IndexRow>
    </IndexBox>
    {actions.map(a => (
      <Action key={a.name}>
        <svg width="58" height="56" viewBox="0 0 58 56" fill="none" stroke="#606060" strokeWidth="3">
          {a.icon}
        </svg>
        {a.name}
      </Action>
    ))}
  </BottomBar>
);

const App = () => (
  <Page>
    <GlobalStyle />
    <BackdropPlot>
      <Watermark />
    </BackdropPlot>
    <StatusBar>
      <Clock>
        5:10
        <WeChat />
      </Clock>
      <StatusIcons />
    </StatusBar>
    <Header>
      <HeaderLeft>
        <BackIcon />
        <Logo>东方<br />财富</Logo>
      </HeaderLeft>
      <TitleBlock>
        <Title>万华化学</Title>
        <SubTitle>
          600309
          <Tag>融</Tag>
          <Tag>沪股通</Tag>
          <Tag>L2</Tag>
          <svg width="28" height="14"><path d="M6 0h21L16.500 14z" fill="#ccc" /></svg>
        </SubTitle>
      </TitleBlock>
      <HeaderRight>
        <HeaderIcons />
      </HeaderRight>
    </Header>
    <Notice>
      盘口新视野：主动买入首次清晰呈现&gt;&gt;
      <Cross size={34} />
    </Notice>
    <Quotes />
    <PeriodTabs />
    <ChartBlock />
    <Promo>
      <Megaphone />
      <PromoText>AI时代来临，如何把握产业红利？</PromoText>
      <PromoDivider />
      <Cross size={32} />
    </Promo>
    <Divider />
    <Footer />
    <SystemNav>
      <svg width="500" height="54" viewBox="294 2315 500 54" fill="none" stroke="#cdcdcd" strokeWidth="4" strokeLinejoin="round">
        <path d="M335 2320v43l-37-21.500z" />
        <circle cx="543.500" cy="2341.500" r="21.500" />
        <rect x="750" y="2322" width="39" height="39" rx="1" />
      </svg>
    </SystemNav>
    <EdgePanel />
  </Page>
);

export default App;
